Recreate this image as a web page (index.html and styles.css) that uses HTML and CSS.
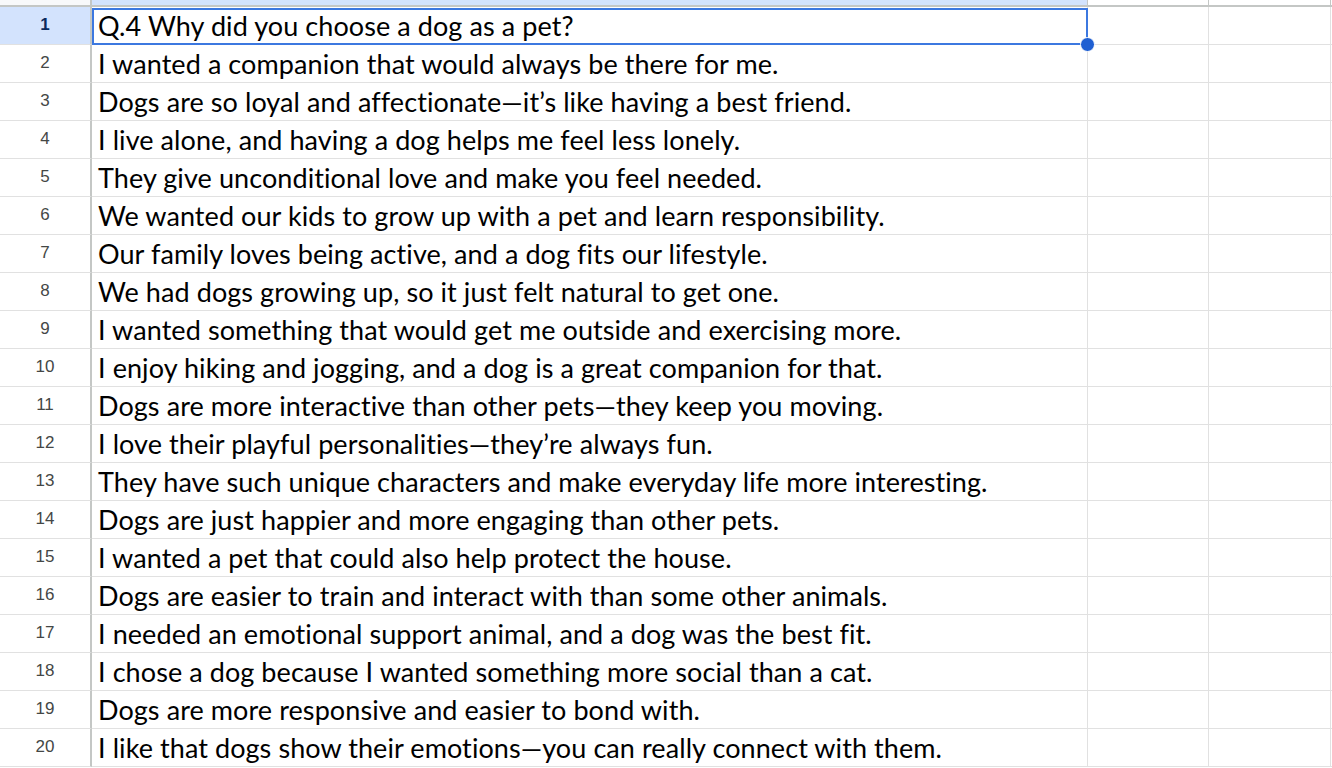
FILE: index.html
```html
<!DOCTYPE html>
<html lang="en">
<head>
    <meta charset="UTF-8">
    <title>Sheet</title>
    <link rel="stylesheet" href="styles.css">
</head>
<body>
    <div class="sheet">
        <div class="corner"></div>
        <div class="colhead active"></div>
        <div class="colhead"></div>
        <div class="colhead"></div>
        <div class="colhead last"></div>

        <div class="rowhead active">1</div>
        <div class="cell selected">Q.4 Why did you choose a dog as a pet?<div class="selection"><span class="handle"></span></div></div>
        <div class="cell"></div><div class="cell"></div><div class="cell last"></div>

        <div class="rowhead">2</div>
        <div class="cell">I wanted a companion that would always be there for me.</div>
        <div class="cell"></div><div class="cell"></div><div class="cell last"></div>

        <div class="rowhead">3</div>
        <div class="cell">Dogs are so loyal and affectionate—it’s like having a best friend.</div>
        <div class="cell"></div><div class="cell"></div><div class="cell last"></div>

        <div class="rowhead">4</div>
        <div class="cell">I live alone, and having a dog helps me feel less lonely.</div>
        <div class="cell"></div><div class="cell"></div><div class="cell last"></div>

        <div class="rowhead">5</div>
        <div class="cell">They give unconditional love and make you feel needed.</div>
        <div class="cell"></div><div class="cell"></div><div class="cell last"></div>

        <div class="rowhead">6</div>
        <div class="cell">We wanted our kids to grow up with a pet and learn responsibility.</div>
        <div class="cell"></div><div class="cell"></div><div class="cell last"></div>

        <div class="rowhead">7</div>
        <div class="cell">Our family loves being active, and a dog fits our lifestyle.</div>
        <div class="cell"></div><div class="cell"></div><div class="cell last"></div>

        <div class="rowhead">8</div>
        <div class="cell">We had dogs growing up, so it just felt natural to get one.</div>
        <div class="cell"></div><div class="cell"></div><div class="cell last"></div>

        <div class="rowhead">9</div>
        <div class="cell">I wanted something that would get me outside and exercising more.</div>
        <div class="cell"></div><div class="cell"></div><div class="cell last"></div>

        <div class="rowhead">10</div>
        <div class="cell">I enjoy hiking and jogging, and a dog is a great companion for that.</div>
        <div class="cell"></div><div class="cell"></div><div class="cell last"></div>

        <div class="rowhead">11</div>
        <div class="cell">Dogs are more interactive than other pets—they keep you moving.</div>
        <div class="cell"></div><div class="cell"></div><div class="cell last"></div>

        <div class="rowhead">12</div>
        <div class="cell">I love their playful personalities—they’re always fun.</div>
        <div class="cell"></div><div class="cell"></div><div class="cell last"></div>

        <div class="rowhead">13</div>
        <div class="cell">They have such unique characters and make everyday life more interesting.</div>
        <div class="cell"></div><div class="cell"></div><div class="cell last"></div>

        <div class="rowhead">14</div>
        <div class="cell">Dogs are just happier and more engaging than other pets.</div>
        <div class="cell"></div><div class="cell"></div><div class="cell last"></div>

        <div class="rowhead">15</div>
        <div class="cell">I wanted a pet that could also help protect the house.</div>
        <div class="cell"></div><div class="cell"></div><div class="cell last"></div>

        <div class="rowhead">16</div>
        <div class="cell">Dogs are easier to train and interact with than some other animals.</div>
        <div class="cell"></div><div class="cell"></div><div class="cell last"></div>

        <div class="rowhead">17</div>
        <div class="cell">I needed an emotional support animal, and a dog was the best fit.</div>
        <div class="cell"></div><div class="cell"></div><div class="cell last"></div>

        <div class="rowhead">18</div>
        <div class="cell">I chose a dog because I wanted something more social than a cat.</div>
        <div class="cell"></div><div class="cell"></div><div class="cell last"></div>

        <div class="rowhead">19</div>
        <div class="cell">Dogs are more responsive and easier to bond with.</div>
        <div class="cell"></div><div class="cell"></div><div class="cell last"></div>

        <div class="rowhead">20</div>
        <div class="cell">I like that dogs show their emotions—you can really connect with them.</div>
        <div class="cell"></div><div class="cell"></div><div class="cell last"></div>
    </div>
</body>
</html>
```

FILE: styles.css
```css
body {
    margin: 0;
    background-color: white;
    overflow: hidden;
}

.sheet {
    display: grid;
    grid-template-columns: 92px 996px 121px 122px 1fr;
    grid-template-rows: 7px repeat(20, 38px);
}

.corner,
.colhead {
    box-sizing: border-box;
    border-bottom: 2px solid #c4c7c5;
    border-right: 1px solid #c4c7c5;
    background-color: white;
}

.corner {
    border-right: 2px solid #c4c7c5;
    background-color: #f8f9fa;
}

.colhead.active {
    background-color: #d3e3fd;
}

.colhead.last,
.cell.last {
    border-right: none;
}

.rowhead {
    box-sizing: border-box;
    border-right: 2px solid #c4c7c5;
    border-bottom: 1px solid #e1e1e1;
    display: flex;
    align-items: center;
    justify-content: center;
    font-family: "Liberation Sans", Arial, sans-serif;
    font-size: 17px;
    color: #444746;
    padding-bottom: 1px;
}

.rowhead.active {
    background-color: #d3e3fd;
    color: #0b2a5c;
    font-weight: bold;
}

.cell {
    box-sizing: border-box;
    border-right: 1px solid #e1e1e1;
    border-bottom: 1px solid #e1e1e1;
    display: flex;
    align-items: flex-end;
    padding: 0 0 4px 6px;
    font-family: Lato, "Open Sans", sans-serif;
    font-size: 27px;
    letter-spacing: 0.08px;
    line-height: 28px;
    color: black;
    white-space: nowrap;
}

.cell.selected {
    position: relative;
}

.selection {
    position: absolute;
    top: 1px;
    left: 0;
    right: -1px;
    bottom: -1px;
    border: 2px solid #3c78e0;
}

.handle {
    position: absolute;
    right: -9px;
    bottom: -9px;
    width: 13px;
    height: 13px;
    border-radius: 50%;
    background-color: #1f5fd2;
    border: 1px solid white;
}
```
